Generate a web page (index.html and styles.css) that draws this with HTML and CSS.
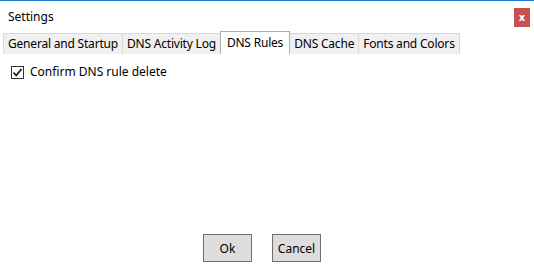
FILE: index.html
```html
<!DOCTYPE html>
<html lang="en">
<head>
    <meta charset="UTF-8">
    <title>Settings</title>
    <link rel="stylesheet" href="styles.css">
</head>
<body>
    <div class="window">
        <div class="title-bar">
            <span class="title">Settings</span>
            <button class="close-button">x</button>
        </div>
        <div class="tabs">
            <div class="tab">General and Startup</div>
            <div class="tab">DNS Activity Log</div>
            <div class="tab selected">DNS Rules</div>
            <div class="tab">DNS Cache</div>
            <div class="tab">Fonts and Colors</div>
        </div>
        <div class="tab-content">
            <label class="check-row">
                <span class="check-box">
                    <svg width="11" height="11" viewBox="0 0 11 11">
                        <path d="M1.5 5.5 L4.2 8.3 L9.6 2" fill="none" stroke="#222" stroke-width="1.8"/>
                    </svg>
                </span>
                Confirm DNS rule delete
            </label>
        </div>
        <div class="buttons">
            <button class="dialog-button">Ok</button>
            <button class="dialog-button">Cancel</button>
        </div>
    </div>
</body>
</html>
```

FILE: styles.css
```css
* {
    margin: 0;
    padding: 0;
    box-sizing: border-box;
}

body {
    font-family: 'Noto Sans', 'Open Sans', sans-serif;
    font-size: 12px;
    color: #000;
    background: #fff;
    width: 534px;
    height: 272px;
    overflow: hidden;
}

.window {
    display: flex;
    flex-direction: column;
    height: 272px;
    border-top: 1px solid #1979ca;
}

.title-bar {
    display: flex;
    justify-content: space-between;
    align-items: flex-start;
    height: 30px;
    padding: 7px 4px 0 8px;
}

.title {
    line-height: 16px;
    padding-top: 1px;
}

.close-button {
    width: 16px;
    height: 19px;
    border: none;
    background: #c75050;
    color: #fff;
    font-family: 'DejaVu Sans', sans-serif;
    font-weight: bold;
    font-size: 10px;
    line-height: 17px;
}

.tabs {
    display: flex;
    align-items: flex-end;
    padding-left: 3px;
    height: 23px;
}

.tab {
    height: 21px;
    line-height: 19px;
    padding: 0 4px;
    letter-spacing: -0.2px;
    background: #f0f0f0;
    border: 1px solid #d9d9d9;
    border-bottom: none;
    margin-right: -1px;
    color: #000;
}

.tab.selected {
    height: 23px;
    line-height: 21px;
    padding: 0 6px;
    background: #fff;
    border-color: #acacac;
    position: relative;
    z-index: 1;
}

.tab-content {
    flex: 1;
    padding: 10px 11px;
}

.check-row {
    display: flex;
    align-items: center;
    gap: 6px;
    line-height: 16px;
}

.check-box {
    display: flex;
    align-items: center;
    justify-content: center;
    width: 13px;
    height: 13px;
    border: 1px solid #333;
    background: #fff;
}

.buttons {
    display: flex;
    justify-content: center;
    gap: 20px;
    padding-bottom: 10px;
    padding-right: 10px;
}

.dialog-button {
    width: 49px;
    height: 28px;
    background: #dddddd;
    border: 1px solid #707070;
    font-family: 'Noto Sans', 'Open Sans', sans-serif;
    font-size: 12px;
    color: #000;
}
```
